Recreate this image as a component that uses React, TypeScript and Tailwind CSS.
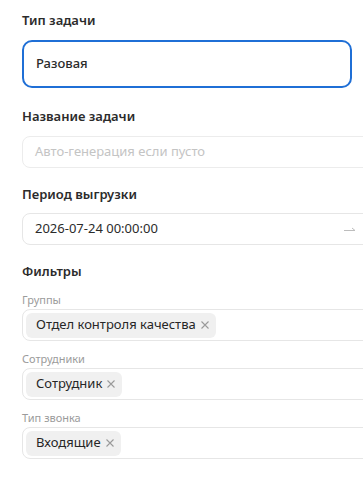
import React from 'react';

function Tag({ label }: { label: string }) {
  return (
    <span className="inline-flex items-center h-[25px] pl-[10px] pr-[6px] rounded-[6px] bg-[#f0f0f0] text-[13px] text-[#262626]">
      {label}
      <svg className="ml-[4px] w-[10px] h-[10px] text-[#9a9a9a]" viewBox="0 0 10 10" fill="none" stroke="currentColor" strokeWidth={1.1}>
        <path d="M1.5 1.5l7 7M8.5 1.5l-7 7" />
      </svg>
    </span>
  );
}

function TagField({ label, tag }: { label: string; tag: string }) {
  return (
    <div>
      <div className="h-[16px] leading-[16px] text-[11px] text-[#9b9b9b]">{label}</div>
      <div className="mt-px w-[380px] h-[32px] border border-[#e6e6e6] rounded-[8px] flex items-center px-[3px]">
        <Tag label={tag} />
      </div>
    </div>
  );
}

export default function App() {
  return (
    <main className="w-[363px] h-[483px] overflow-hidden bg-white pl-[22px] pt-[10px] font-['Noto_Sans','Open_Sans',sans-serif]">
      {/* --- ТИП ЗАДАЧИ --- */}
      <div className="h-[20px] leading-[20px] text-[13px] font-semibold text-[#2b2b2b]">Тип задачи</div>
      <div className="mt-[10px] w-[330px] h-[48px] border-2 border-[#1f6fd6] rounded-[10px] flex items-center px-[12px] text-[13px] font-medium text-[#2b2b2b]">
        Разовая
      </div>

      {/* --- НАЗВАНИЕ --- */}
      <div className="mt-[18px] h-[20px] leading-[20px] text-[13px] font-semibold text-[#2b2b2b]">Название задачи</div>
      <div className="mt-[10px] w-[380px] h-[32px] border border-[#ececec] rounded-[8px] flex items-center px-[12px] text-[13px] text-[#c4c4c4]">
        Авто-генерация если пусто
      </div>

      {/* --- ПЕРИОД --- */}
      <div className="mt-[16px] h-[20px] leading-[20px] text-[13px] font-semibold text-[#2b2b2b]">Период выгрузки</div>
      <div className="mt-[9px] w-[380px] h-[32px] border border-[#e6e6e6] rounded-[8px] flex items-center pl-[12px] text-[13px] text-[#2b2b2b]">
        <span className="w-[309px]">2026-07-24 00:00:00</span>
        <svg className="w-[12px] h-[8px] text-[#bdbdbd]" viewBox="0 0 12 8" fill="none" stroke="currentColor" strokeWidth={1}>
          <path d="M0 5.5h11M8 3l3 2.5" />
        </svg>
      </div>

      {/* --- ФИЛЬТРЫ --- */}
      <div className="mt-[16px] h-[20px] leading-[20px] text-[13px] font-semibold text-[#2b2b2b]">Фильтры</div>
      <div className="mt-[11px] flex flex-col gap-[10px]">
        <TagField label="Группы" tag="Отдел контроля качества" />
        <TagField label="Сотрудники" tag="Сотрудник" />
        <TagField label="Тип звонка" tag="Входящие" />
      </div>
    </main>
  );
}
